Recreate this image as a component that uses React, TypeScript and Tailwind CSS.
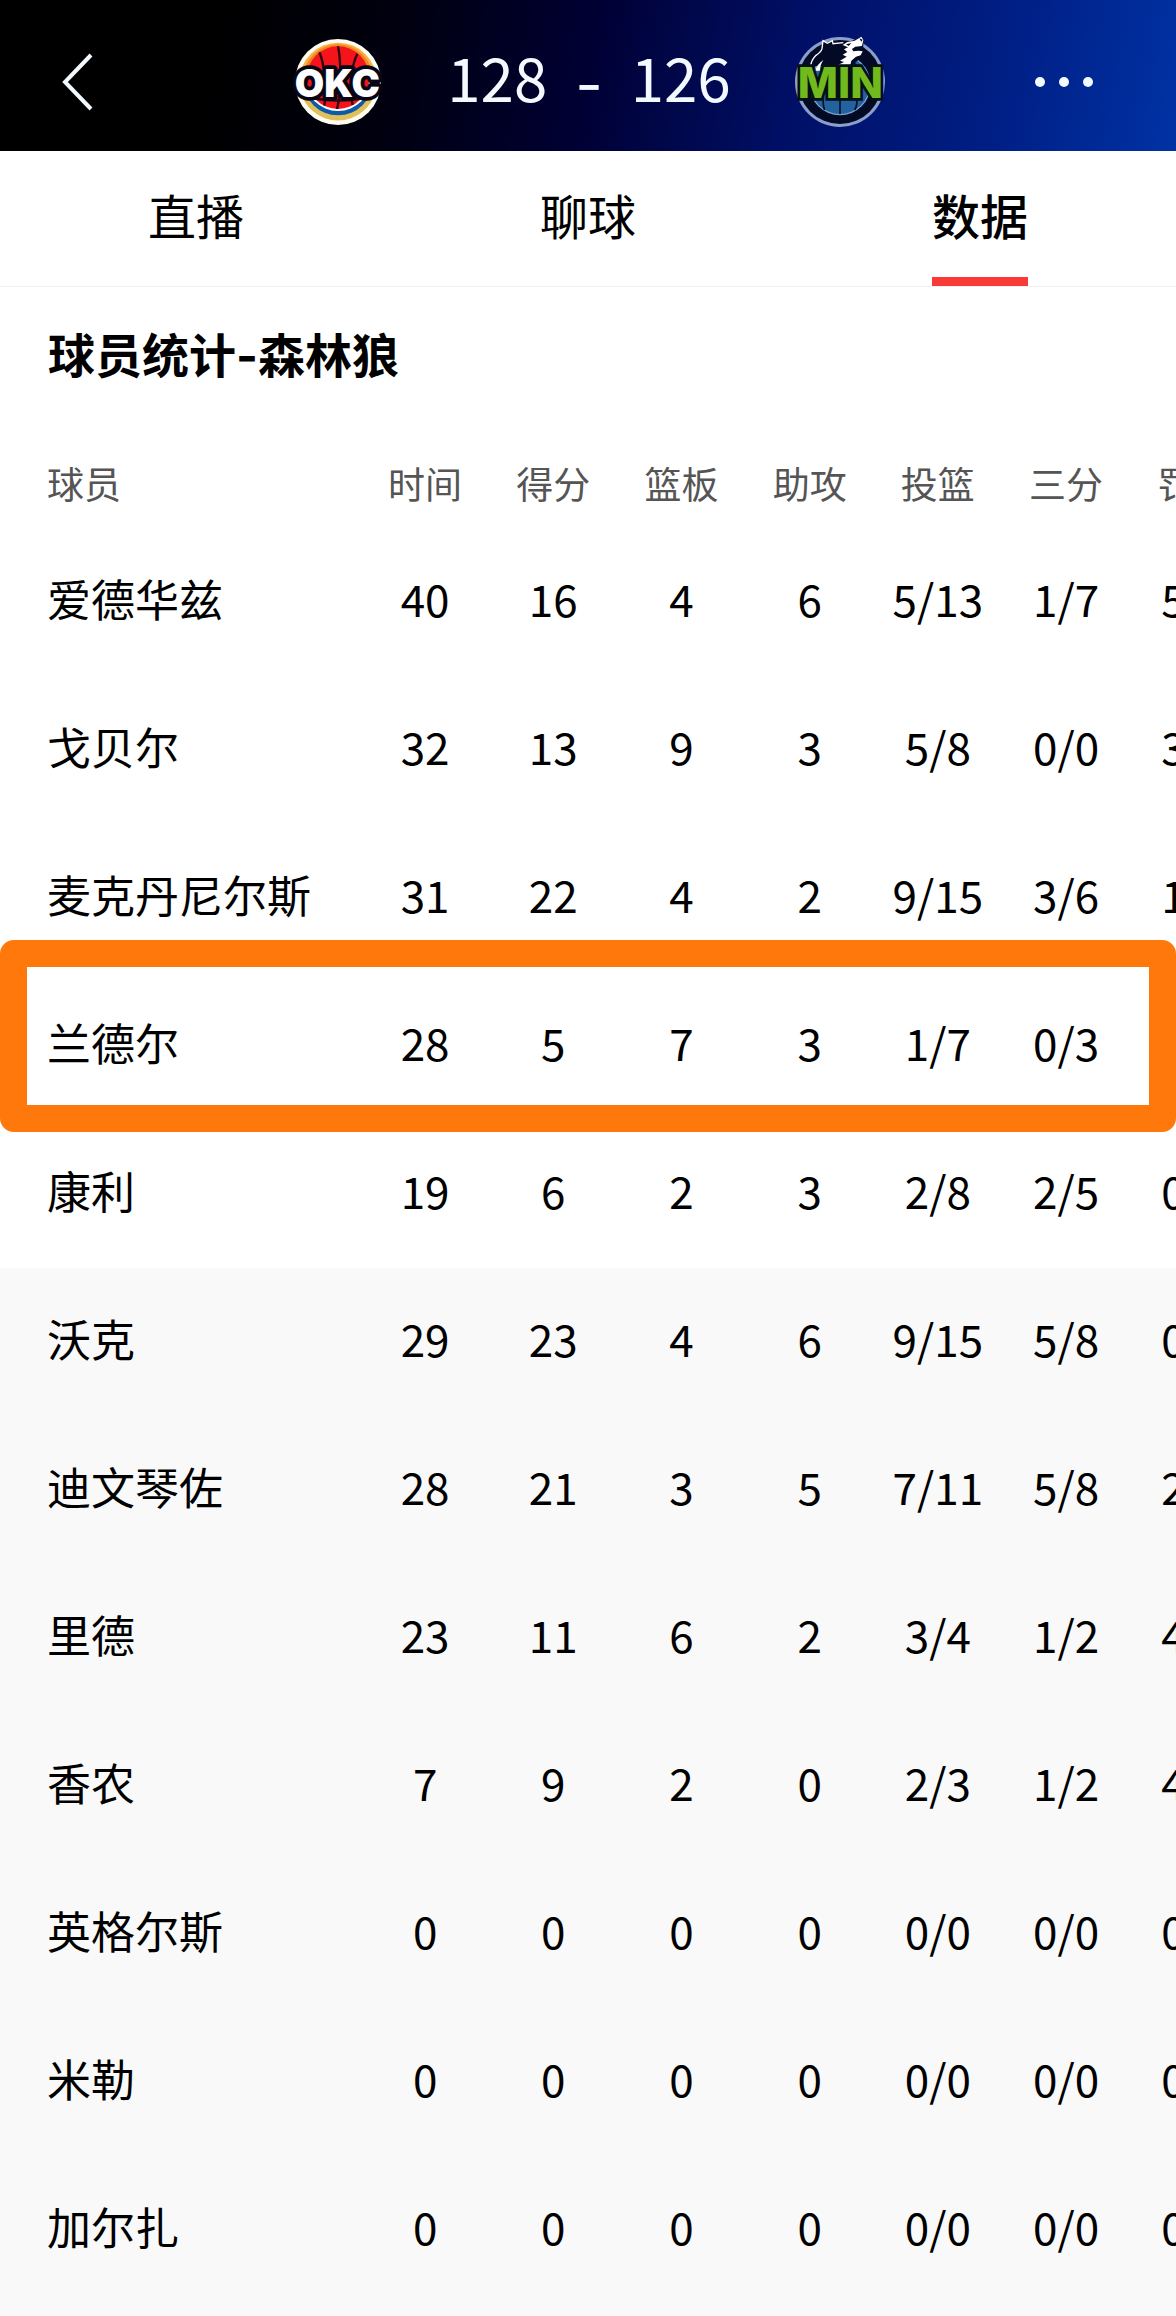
import React from "react";

const COLUMNS = ["时间", "得分", "篮板", "助攻", "投篮", "三分", "罚球"];

type Player = { name: string; stats: string[]; starter?: boolean; marked?: boolean };

const PLAYERS: Player[] = [
  { name: "爱德华兹", stats: ["40", "16", "4", "6", "5/13", "1/7", "5/6"], starter: true },
  { name: "戈贝尔", stats: ["32", "13", "9", "3", "5/8", "0/0", "3/6"], starter: true },
  { name: "麦克丹尼尔斯", stats: ["31", "22", "4", "2", "9/15", "3/6", "1/2"], starter: true },
  { name: "兰德尔", stats: ["28", "5", "7", "3", "1/7", "0/3", "3/4"], starter: true, marked: true },
  { name: "康利", stats: ["19", "6", "2", "3", "2/8", "2/5", "0/0"], starter: true },
  { name: "沃克", stats: ["29", "23", "4", "6", "9/15", "5/8", "0/0"] },
  { name: "迪文琴佐", stats: ["28", "21", "3", "5", "7/11", "5/8", "2/2"] },
  { name: "里德", stats: ["23", "11", "6", "2", "3/4", "1/2", "4/4"] },
  { name: "香农", stats: ["7", "9", "2", "0", "2/3", "1/2", "4/4"] },
  { name: "英格尔斯", stats: ["0", "0", "0", "0", "0/0", "0/0", "0/0"] },
  { name: "米勒", stats: ["0", "0", "0", "0", "0/0", "0/0", "0/0"] },
  { name: "加尔扎", stats: ["0", "0", "0", "0", "0/0", "0/0", "0/0"] },
];

function ThunderLogo() {
  return (
    <svg viewBox="33 24 270 270" className="size-[90px]" role="img" aria-label="OKC">
      <circle cx="168" cy="159" r="129" fill="#fffdf0" />
      <circle cx="168" cy="157" r="116" fill="#f9b04a" />
      <path d="M54 180A116 116 0 0 0 282 180Z" fill="#e3bf5c" />
      <circle cx="168" cy="155" r="104" fill="#0b5ba8" />
      <circle cx="168" cy="147" r="99" fill="#fff" />
      <path d="M64 150A104 104 0 0 1 272 150Z" fill="#f5831f" />
      <circle cx="168" cy="146" r="94" fill="#f5141c" />
      <g fill="none" stroke="#2a0610" strokeWidth="7">
        <path d="M168 52C178 100 178 190 165 240" />
        <path d="M112 70C128 105 134 180 127 230" />
        <path d="M226 74C208 110 200 180 212 228" />
        <path d="M88 207Q168 222 248 207" />
      </g>
      <text
        x="166"
        y="203"
        textAnchor="middle"
        fontFamily="Inter, sans-serif"
        fontWeight="900"
        fontSize="114"
        fill="#fff"
        stroke="#080614"
        strokeWidth="22"
        strokeLinejoin="round"
        paintOrder="stroke"
      >
        OKC
      </text>
    </svg>
  );
}

function TimberwolvesLogo() {
  return (
    <svg viewBox="33 36 276 276" className="size-[92px]" role="img" aria-label="MIN">
      <circle cx="168" cy="174" r="135" fill="#8b9fca" />
      <circle cx="168" cy="174" r="126" fill="#030a26" />
      <circle cx="168" cy="182" r="92" fill="#7ea2cc" />
      <circle cx="168" cy="182" r="88" fill="#22639f" />
      <g fill="none" stroke="#05102c" strokeWidth="5">
        <path d="M168 94V270" />
        <path d="M118 220Q116 244 122 258M218 220Q221 244 212 258" />
        <path d="M204 110Q228 130 236 180" />
      </g>
      {/* wolf head */}
      <path
        d="M76 130Q86 86 114 74L117 50L128 57L145 50L150 58L190 56L232 38L238 62L234 98L202 126H76Z"
        fill="#030a26"
      />
      <path
        d="M80 126Q82 108 96 94Q112 84 114 74L117 50L130 58L145 50L147 59L178 56"
        fill="none"
        stroke="#fff"
        strokeWidth="4"
      />
      <path
        d="M176 63L190 54L212 50L232 38L238 48L234 66L214 68L204 75L208 82L222 80L236 82L230 94L216 98L202 110L198 128L160 124L180 114L168 110L188 98L176 92L190 84L180 76L192 70Z"
        fill="#fff"
      />
      <path d="M186 61L202 57L194 66ZM226 43L236 47L232 53Z" fill="#030a26" />
      <path d="M94 140Q98 122 118 108Q106 128 108 140Z" fill="#fff" />
      <text
        x="169"
        y="222"
        textAnchor="middle"
        fontFamily="Inter, sans-serif"
        fontWeight="800"
        fontSize="128"
        fill="#71b91c"
        stroke="#031016"
        strokeWidth="16"
        paintOrder="stroke"
      >
        MIN
      </text>
    </svg>
  );
}

function Header() {
  return (
    <header className="grid h-[151px] grid-cols-[1fr_auto_1fr] items-center bg-[linear-gradient(100deg,#000_0%,#000_18%,#000010_34%,#000034_50%,#001068_68%,#001e84_84%,#0032a4_100%)] pl-[52px] pr-12 pt-3 text-[#f2f9ff]">
      <button type="button" aria-label="返回" className="justify-self-start px-2">
        <svg viewBox="0 0 34 60" className="h-15 w-[34px]" fill="none" stroke="currentColor" strokeWidth="4">
          <path d="M31 3L5 30L31 57" />
        </svg>
      </button>
      <div className="flex items-center gap-16">
        <ThunderLogo />
        <div className="flex items-center gap-7 pb-3 text-[60px] leading-none">
          <span>128</span>
          <span className="pt-4 font-['Inter',sans-serif]">-</span>
          <span>126</span>
        </div>
        <TimberwolvesLogo />
      </div>
      <button type="button" aria-label="更多" className="flex gap-[14px] justify-self-end px-[35px]">
        <span className="size-[10px] rounded-full bg-current" />
        <span className="size-[10px] rounded-full bg-current" />
        <span className="size-[10px] rounded-full bg-current" />
      </button>
    </header>
  );
}

function Tabs() {
  return (
    <nav className="grid h-[136px] grid-cols-3 border-b border-[#f3f3f3] text-[48px] leading-[126px]">
      <a href="#live" className="text-center">
        直播
      </a>
      <a href="#chat" className="text-center">
        聊球
      </a>
      <a
        href="#stats"
        aria-current="page"
        className="justify-self-center border-b-[9px] border-[#fa3a37] font-medium"
      >
        数据
      </a>
    </nav>
  );
}

function StatsTable() {
  return (
    <table className="w-[107%] table-fixed border-collapse text-center">
      <thead>
        <tr className="h-[98px] text-[37px] leading-[54px] text-[#555]">
          <th scope="col" className="w-[361px] pl-[47px] pt-[7px] text-left font-normal">
            球员
          </th>
          {COLUMNS.map((label) => (
            <th key={label} scope="col" className="whitespace-nowrap pt-[7px] font-normal">
              {label}
            </th>
          ))}
        </tr>
      </thead>
      <tbody>
        {PLAYERS.map((player) => (
          <tr
            key={player.name}
            className={
              player.starter
                ? "relative h-[148px] bg-white text-[44px] leading-[64px]"
                : "relative h-[148px] bg-[#f9f9f9] text-[44px] leading-[64px]"
            }
          >
            <th scope="row" className="whitespace-nowrap pb-2 pl-[47px] text-left font-normal">
              {player.name}
              {player.marked && (
                <span className="pointer-events-none absolute -bottom-3 -top-8 left-0 z-10 w-screen rounded-[14px] border-[27px] border-[#ff780c]" />
              )}
            </th>
            {player.stats.map((value, i) => (
              <td key={COLUMNS[i]} className="whitespace-nowrap pb-2">
                {value}
              </td>
            ))}
          </tr>
        ))}
      </tbody>
    </table>
  );
}

export default function App() {
  return (
    <div className="min-h-screen overflow-hidden bg-[#f9f9f9] font-['Noto_Sans_CJK_SC',sans-serif] text-black">
      <Header />
      <main className="bg-white">
        <Tabs />
        <h1 className="px-12 pb-[38px] pt-[30px] text-[47px] font-bold leading-[72px]">
          球员统计<span className="font-['Inter',sans-serif]">-</span>森林狼
        </h1>
        <StatsTable />
      </main>
    </div>
  );
}
